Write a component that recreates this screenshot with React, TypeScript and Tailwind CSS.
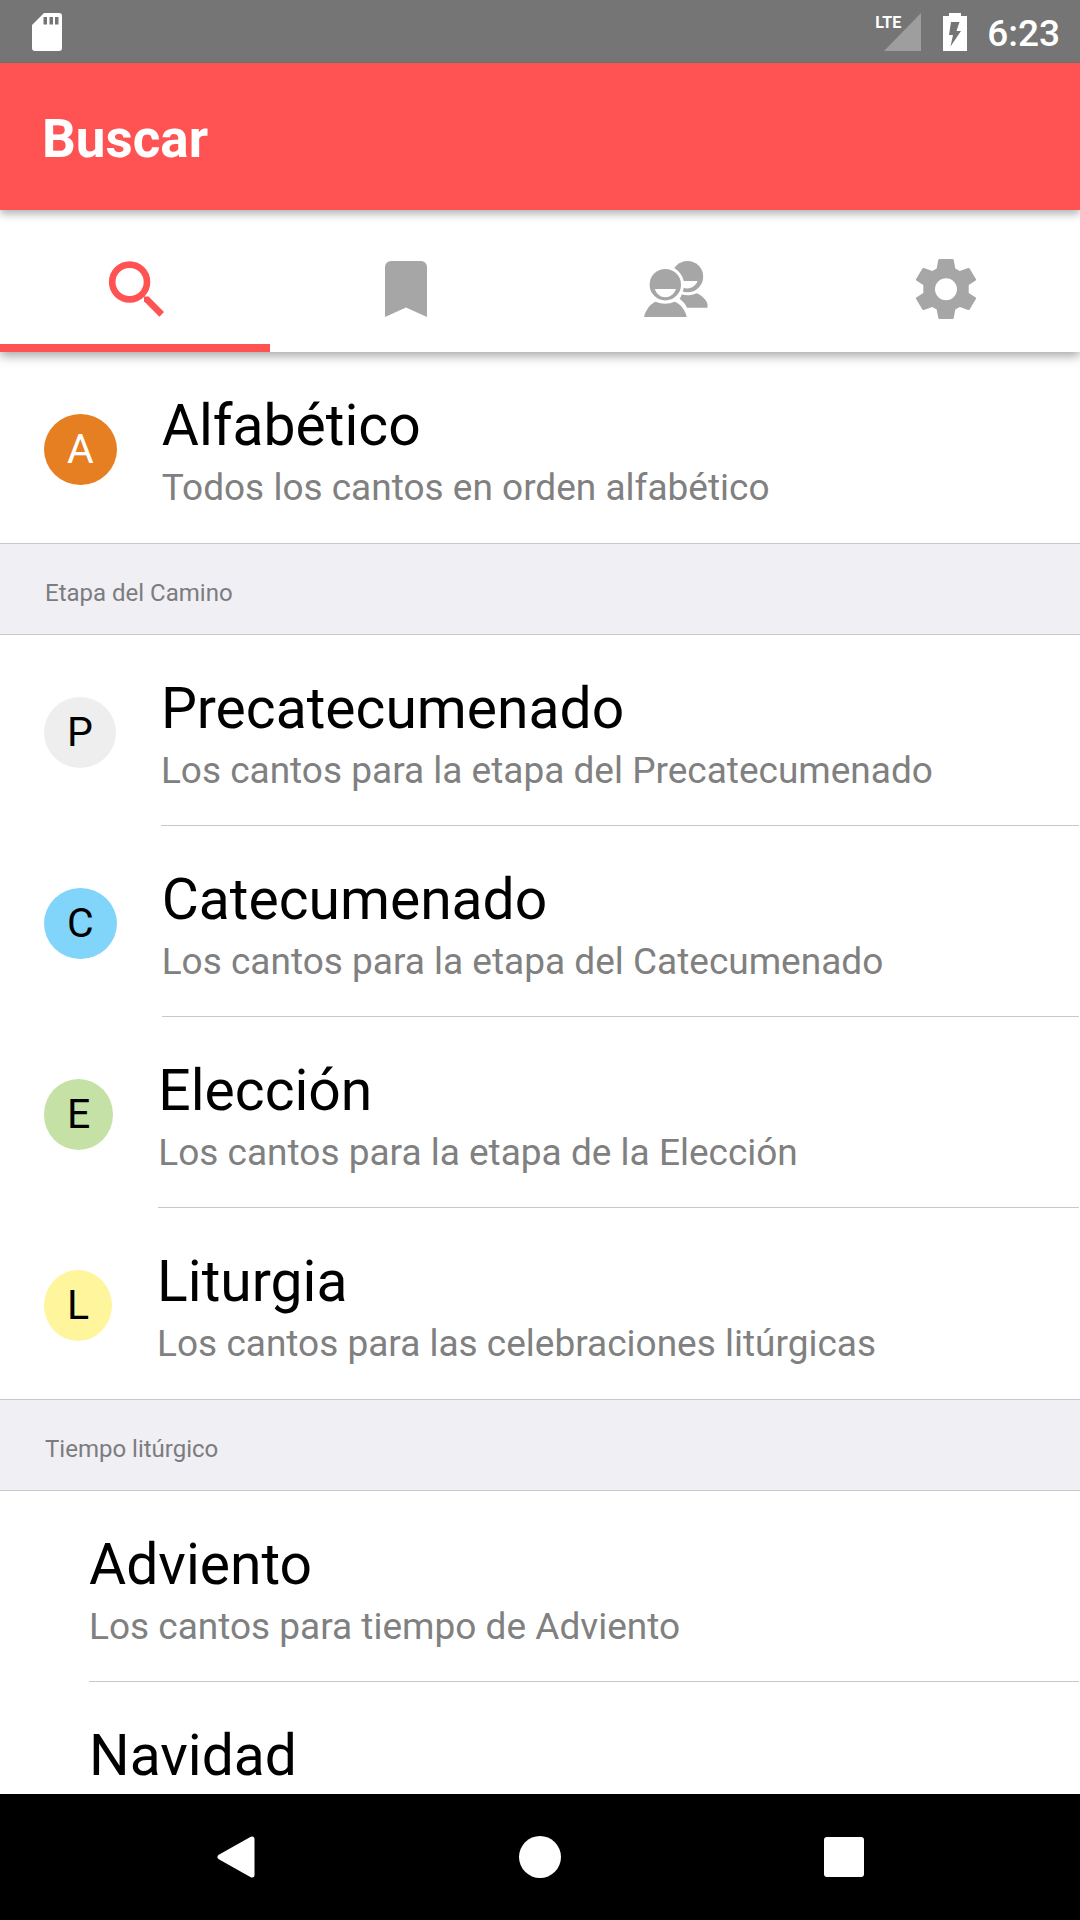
import { useState, type ReactNode } from "react";
import clsx from "clsx";

type Item = {
  title: string;
  note?: string;
  letter?: string;
  badge?: string;
};

type Section = {
  header?: string;
  items: Item[];
};

const sections: Section[] = [
  {
    items: [
      { title: "Alfabético", note: "Todos los cantos en orden alfabético", letter: "A", badge: "bg-[#e67e22] text-white" },
    ],
  },
  {
    header: "Etapa del Camino",
    items: [
      { title: "Precatecumenado", note: "Los cantos para la etapa del Precatecumenado", letter: "P", badge: "bg-[#eeeeee] text-black" },
      { title: "Catecumenado", note: "Los cantos para la etapa del Catecumenado", letter: "C", badge: "bg-[#81d4fa] text-black" },
      { title: "Elección", note: "Los cantos para la etapa de la Elección", letter: "E", badge: "bg-[#c5e1a5] text-black" },
      { title: "Liturgia", note: "Los cantos para las celebraciones litúrgicas", letter: "L", badge: "bg-[#fff59d] text-black" },
    ],
  },
  {
    header: "Tiempo litúrgico",
    items: [
      { title: "Adviento", note: "Los cantos para tiempo de Adviento" },
      { title: "Navidad" },
    ],
  },
];

function TabIcon({ children }: { children: ReactNode }) {
  return (
    <svg viewBox="0 0 64 64" className="size-16" fill="currentColor" aria-hidden="true">
      {children}
    </svg>
  );
}

const tabs = [
  {
    name: "Buscar",
    icon: (
      <TabIcon>
        <circle cx="25.6" cy="25" r="17.4" fill="none" stroke="currentColor" strokeWidth="6.6" />
        <path d="M40 39.4h4.6L60 55l-4.6 4.8L40 44.2z" />
      </TabIcon>
    ),
  },
  {
    name: "Listas",
    icon: (
      <TabIcon>
        <path d="M17 4h30a6 6 0 0 1 6 6v50l-21-9.4L11 60V10a6 6 0 0 1 6-6z" />
      </TabIcon>
    ),
  },
  {
    name: "Comunidad",
    icon: (
      <TabIcon>
        <mask id="behind">
          <rect width="64" height="64" fill="#fff" />
          <circle cx="21.3" cy="27.7" r="18.8" fill="#000" />
          <path d="M38 24h15.500c-1.600 4.600-5.800 7.200-10 7.400-1.600 0-3-.2-4.400-.8z" fill="#000" />
        </mask>
        <circle cx="43.5" cy="19.6" r="15.7" mask="url(#behind)" />
        <path
          fillRule="evenodd"
          d="M21.3 12a15.7 15.7 0 1 1 0 31.4 15.7 15.7 0 0 1 0-31.4zM10.8 32c1.8 5.2 5.8 8.2 10.5 8.2s8.9-3 10.7-8.2z"
        />
        <path d="M0 60c1.6-6.5 6.500-13.500 11.500-15.200 6.400 2.600 13 2.600 19.300 0C36 46.500 41.600 53.500 42.700 60z" />
        <path d="M37.600 37.400c4.800 1.400 10 1 14.800-1.200C58 38 63.500 44 63.500 47.500V50.700H43c-1.600-3.600-4.200-6.400-7.400-8.900 1-1.300 1.700-2.700 2-4.400z" />
      </TabIcon>
    ),
  },
  {
    name: "Ajustes",
    icon: (
      <TabIcon>
        <path
          fillRule="evenodd"
          d="M25.500 2h13q1 0 1.200 1l1.600 8.500 4.500 2.600 8.300-3.100q1-.3 1.500.6l6.300 10.400q.5.900-.2 1.500L54.700 28v8l7 4.500q.7.600.2 1.500l-6.300 10.400q-.5.900-1.500.6l-8.300-3.100-4.500 2.600-1.600 8.500q-.2 1-1.200 1h-13q-1 0-1.200-1l-1.600-8.500-4.500-2.600-8.300 3.100q-1 .3-1.500-.6L2.100 42q-.5-.9.200-1.500L9.300 36v-8l-7-4.500q-.7-.6-.2-1.500L8.400 11.600q.5-.9 1.500-.6l8.300 3.100 4.500-2.600L24.300 3q.2-1 1.200-1zM32 21.200a11 11 0 1 0 0 22 11 11 0 0 0 0-22z"
        />
      </TabIcon>
    ),
  },
];

function StatusBar() {
  return (
    <div className="flex h-[63px] shrink-0 items-center justify-between bg-[#757575] pl-8 pr-5 text-white">
      <svg viewBox="0 0 30 38" className="h-[38px] w-[30px]" aria-hidden="true">
        <path
          fill="#fff"
          fillRule="evenodd"
          d="M12 0h15a3 3 0 0 1 3 3v32a3 3 0 0 1-3 3H3a3 3 0 0 1-3-3V12zM11.500 4v7.500H15V4zM17.500 4v7.500H21V4zM23 4v7.500h3.500V4z"
        />
      </svg>
      <div className="flex items-center">
        <div className="relative">
          <svg viewBox="0 0 37 38" className="h-[38px] w-[37px]" aria-hidden="true">
            <path d="M37 0v38H0z" fill="#9e9e9e" />
          </svg>
          <span className="absolute right-5 top-0 text-base leading-5 font-bold">LTE</span>
        </div>
        <svg viewBox="0 0 24 38" className="ml-[22px] h-[38px] w-6" aria-hidden="true">
          <path
            fill="#fff"
            fillRule="evenodd"
            d="M6 0h12v3h6v35H0V3h6zM8 9L6 22h4L7.500 33.500 18 18h-4.500l3-9z"
          />
        </svg>
        <span className="ml-5 pt-1 text-[37px] leading-[42px] font-medium">6:23</span>
      </div>
    </div>
  );
}

function Row({ item, last }: { item: Item; last: boolean }) {
  return (
    <li>
      <a href="#" className={clsx("flex items-center gap-[45px]", item.letter ? "pl-11" : "pl-[89px]")}>
        {item.letter && (
          <span className={clsx("mt-1 h-[71px] shrink-0 rounded-[50%] px-[23px] text-[41px] leading-[71px]", item.badge)}>
            {item.letter}
          </span>
        )}
        <span className={clsx("mr-px flex-1 border-b pt-[38px] pb-7", last ? "border-transparent" : "border-[#c8c7cc]")}>
          <span className="block text-[57px] leading-[72px] text-black">{item.title}</span>
          {item.note && <span className="block text-[37px] leading-[52px] text-[#808080]">{item.note}</span>}
        </span>
      </a>
    </li>
  );
}

export default function App() {
  const [active, setActive] = useState("Buscar");

  return (
    <div className="flex h-screen flex-col bg-white font-[Roboto,sans-serif]">
      <StatusBar />
      <header className="z-20 flex h-[147px] shrink-0 items-center bg-[#ff5252] px-[42px] pt-1 shadow-[0_4px_8px_rgba(0,0,0,0.3)]">
        <h1 className="text-[53px] leading-[64px] font-bold text-white">{active}</h1>
      </header>

      <nav className="z-10 flex h-[142px] shrink-0 bg-white shadow-[0_4px_10px_rgba(0,0,0,0.35)]">
        {tabs.map((tab) => (
          <button
            key={tab.name}
            aria-label={tab.name}
            onClick={() => setActive(tab.name)}
            className={clsx("flex flex-1 flex-col", tab.name === active ? "text-[#ff5252]" : "text-[#a6a6a6]")}
          >
            <span className="flex w-full flex-1 items-center justify-center pt-6 pl-0.5">{tab.icon}</span>
            <span className={clsx("h-2 w-full", tab.name === active && "bg-[#ff5252]")} />
          </button>
        ))}
      </nav>

      <main className="min-h-0 flex-1 overflow-y-auto [scrollbar-width:none]">
        {sections.map((section, i) => (
          <section key={i}>
            {section.header && (
              <h2 className="border-y border-[#c8c7cc] bg-[#efeff4] pt-[33px] pb-[25px] pl-[45px] text-[24px] leading-8 text-[#7c7c80]">
                {section.header}
              </h2>
            )}
            <ul>
              {section.items.map((item, j) => (
                <Row key={item.title} item={item} last={j === section.items.length - 1} />
              ))}
            </ul>
          </section>
        ))}
      </main>

      <div className="flex h-[126px] shrink-0 items-center bg-black px-[84px]">
        <button aria-label="Atrás" className="flex flex-1 justify-center">
          <svg viewBox="0 0 38 42" className="h-[42px] w-[38px]" aria-hidden="true">
            <path d="M3 21L35 3v36z" fill="#fff" stroke="#fff" strokeWidth="5" strokeLinejoin="round" />
          </svg>
        </button>
        <button aria-label="Inicio" className="flex flex-1 justify-center">
          <span className="size-[42px] rounded-full bg-white" />
        </button>
        <button aria-label="Recientes" className="flex flex-1 justify-center">
          <span className="size-10 rounded-[3px] bg-white" />
        </button>
      </div>
    </div>
  );
}
